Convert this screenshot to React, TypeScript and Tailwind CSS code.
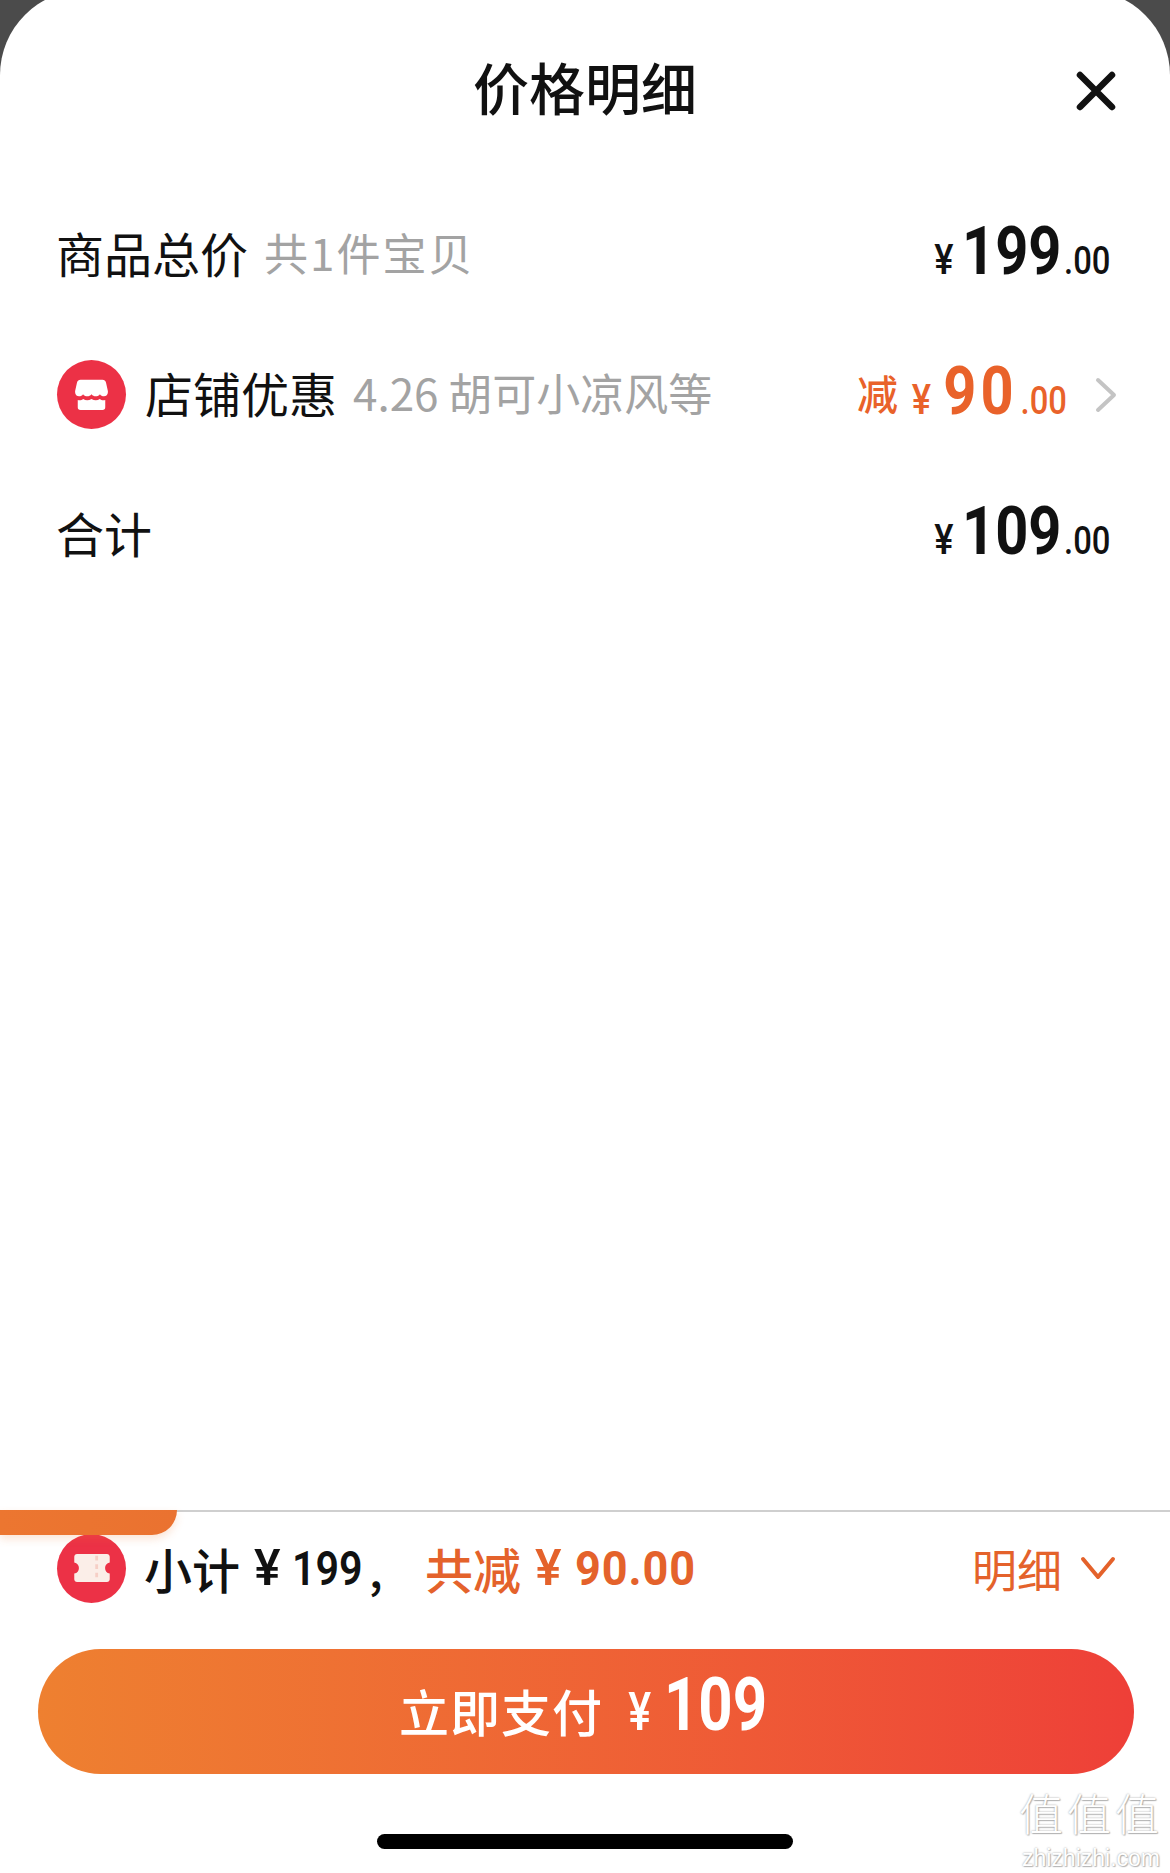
const numFont = "font-['Roboto','Liberation_Sans',sans-serif]";

function ShopIcon() {
    return (
        <span className="mt-[4px] flex h-[69px] w-[69px] shrink-0 items-center justify-center rounded-full bg-[#ec3146]">
            <svg width="33" height="33" viewBox="0 0 36 36" fill="none">
                {/* awning */}
                <path
                    d="M6 2h24c2 0 3.2 1 3.8 3l2 9c.6 3.6-1.400 6-4.200 6-2 0-3.400-1-4.400-2.400-1 1.400-2.600 2.400-4.600 2.400-1.800 0-3.400-1-4.600-2.400C16.800 19 15.200 20 13.400 20c-2 0-3.600-1-4.600-2.400C7.800 19 6.400 20 4.400 20 1.600 20-.4 17.600.2 14l2-9C2.800 3 4 2 6 2z"
                    fill="#fff"
                />
                {/* base */}
                <path
                    d="M3 24c1.800.6 4.400.4 6-1 2.400 1.800 6 1.800 9 0 3 1.800 6.600 1.800 9 0 1.600 1.400 4.200 1.600 6 1v8c0 2-1 3-3 3H6c-2 0-3-1-3-3v-8z"
                    fill="#fff"
                />
            </svg>
        </span>
    );
}

function TicketIcon() {
    return (
        <span className="flex h-[69px] w-[69px] shrink-0 items-center justify-center rounded-full bg-[#ec3146]">
            <svg width="36" height="28" viewBox="0 0 38 30" fill="none">
                <path
                    d="M3 0h32c1.700 0 3 1.300 3 3v6c-3.200.6-5 3-5 6s1.800 5.400 5 6v6c0 1.700-1.300 3-3 3H3c-1.700 0-3-1.300-3-3v-6c3.200-.6 5-3 5-6S3.200 9.600 0 9V3c0-1.700 1.300-3 3-3z"
                    fill="#fbeee8"
                />
                <path d="M24 2v26" stroke="#f6cfc6" strokeWidth="3" strokeDasharray="5 4" />
            </svg>
        </span>
    );
}

// condensed price, squeezed towards the right edge of the row
function Price({ value }: { value: string }) {
    return (
        <div className={`mt-[4px] flex origin-right scale-x-[0.862] items-baseline ${numFont}`}>
            <span className="text-[42px] font-medium">¥</span>
            <span className="ml-[10px] text-[67px] leading-none font-bold">{value}</span>
            <span className="ml-[3px] text-[38px] leading-none font-medium">.00</span>
        </div>
    );
}

export default function App() {
    return (
        <div className="relative flex h-[1873px] w-[1170px] flex-col overflow-hidden bg-[#4b4b4b] font-['Noto_Sans_CJK_SC','Liberation_Sans',sans-serif] text-[#111]">
            <div className="-mt-[10px] flex flex-1 flex-col rounded-t-[85px] bg-white">
                {/* Title */}
                <div className="relative flex h-[192px] shrink-0 justify-center pt-[55px]">
                    <h1 className="text-[56px] leading-[82px] font-medium">价格明细</h1>
                    <button className="absolute top-[71px] right-[44px]">
                        <svg width="60" height="60" viewBox="0 0 60 60" fill="none" stroke="#111" strokeWidth="6.5" strokeLinecap="round">
                            <path d="M14 14l32 32M46 14L14 46" />
                        </svg>
                    </button>
                </div>

                {/* Goods total */}
                <div className="flex h-[140px] shrink-0 items-center justify-between pr-[60px] pl-[56px]">
                    <div className="flex items-center">
                        <span className="text-[48px]">商品总价</span>
                        <span className="ml-[16px] text-[44px] tracking-[2px] text-[#a3a3a3]">共1件宝贝</span>
                    </div>
                    <Price value="199" />
                </div>

                {/* Shop discount */}
                <div className="flex h-[140px] shrink-0 items-center justify-between pr-[52px] pl-[57px]">
                    <div className="flex items-center">
                        <ShopIcon />
                        <span className="ml-[19px] text-[48px]">店铺优惠</span>
                        <span className="ml-[16px] text-[44px] text-[#a3a3a3]">4.26 胡可小凉风等</span>
                    </div>
                    <div className="flex items-center text-[#e9622a]">
                        <span className="-mr-[11px] text-[41px] leading-none font-medium">减</span>
                        <div className={`mt-[4px] flex origin-right scale-x-[0.862] items-baseline ${numFont}`}>
                            <span className="text-[42px] font-medium">¥</span>
                            <span className="ml-[14px] text-[67px] leading-none font-bold tracking-[5px]">90</span>
                            <span className="ml-[3px] text-[38px] leading-none font-medium">.00</span>
                        </div>
                        <svg width="24" height="40" viewBox="0 0 24 40" fill="none" stroke="#c4c4c4" strokeWidth="4" strokeLinecap="round" strokeLinejoin="round" className="mt-[6px] ml-[27px]">
                            <path d="M4 5l16 15L4 35" />
                        </svg>
                    </div>
                </div>

                {/* Total */}
                <div className="flex h-[140px] shrink-0 items-center justify-between pr-[60px] pl-[56px]">
                    <span className="text-[48px]">合计</span>
                    <Price value="109" />
                </div>

                <div className="flex-1" />

                {/* Bottom bar */}
                <div className="relative shrink-0 border-t-2 border-[#cfcfcf]">
                    <div className="absolute -top-[2px] left-0 h-[25px] w-[177px] rounded-br-[30px] bg-gradient-to-r from-[#ec7630] to-[#ea7230] shadow-[0_4px_8px_rgba(236,118,48,0.2)]" />
                    <div className="flex h-[137px] items-center justify-between pr-[52px] pb-[25px] pl-[57px]">
                        <div className="flex items-center">
                            <TicketIcon />
                            <span className="ml-[18px] text-[48px] leading-none font-medium">小计</span>
                            <span className={`ml-[14px] w-[28px] text-[50px] leading-none font-medium ${numFont}`}>¥</span>
                            <span className={`ml-[10px] w-[77px] origin-left scale-x-[0.84] text-[49px] leading-none font-semibold ${numFont}`}>199</span>
                            <span className="w-[56px] text-[46px] leading-none font-medium">,</span>
                            <span className="text-[48px] leading-none font-medium text-[#e4622b]">共减</span>
                            <span className={`ml-[14px] w-[28px] text-[50px] leading-none font-medium text-[#e4622b] ${numFont}`}>¥</span>
                            <span className={`ml-[12px] origin-left scale-x-[0.92] text-[49px] leading-none font-bold tracking-[1px] text-[#e4622b] ${numFont}`}>90.00</span>
                        </div>
                        <div className="flex items-center text-[#e4622b]">
                            <span className="text-[45px] leading-none">明细</span>
                            <svg width="40" height="26" viewBox="0 0 40 26" fill="none" stroke="currentColor" strokeWidth="4" strokeLinecap="round" strokeLinejoin="round" className="ml-[16px]">
                                <path d="M5 4l15 18L35 4" />
                            </svg>
                        </div>
                    </div>

                    <div className="mr-[36px] ml-[38px] flex h-[125px] items-center justify-center rounded-full bg-gradient-to-r from-[#ee8030] to-[#ee3f38] pb-[4px] text-white">
                        <span className="text-[50px] leading-none font-medium tracking-[1px]">立即支付</span>
                        <div className={`-mr-[36px] -ml-[2px] flex origin-left scale-x-[0.8] items-baseline ${numFont}`}>
                            <span className="ml-[34px] text-[54px] font-medium">¥</span>
                            <span className="ml-[16px] text-[75px] leading-none font-bold">109</span>
                        </div>
                    </div>

                    <div className="flex h-[99px] items-start justify-center pt-[60px]">
                        <div className="h-[15px] w-[416px] rounded-full bg-black" />
                    </div>
                </div>
            </div>

            {/* Watermark */}
            <div className="absolute right-[7px] bottom-[3px] flex w-[144px] flex-col items-center text-white [text-shadow:0_0_2px_#9a9a9a,1px_1px_1px_#bdbdbd]">
                <span className="h-[44px] text-[44px] leading-[44px] font-light tracking-[4px]">值值值</span>
                <span className="mt-[12px] h-[24px] font-['Liberation_Sans',sans-serif] text-[23px] leading-[24px]">zhizhizhi.com</span>
            </div>
        </div>
    );
}
